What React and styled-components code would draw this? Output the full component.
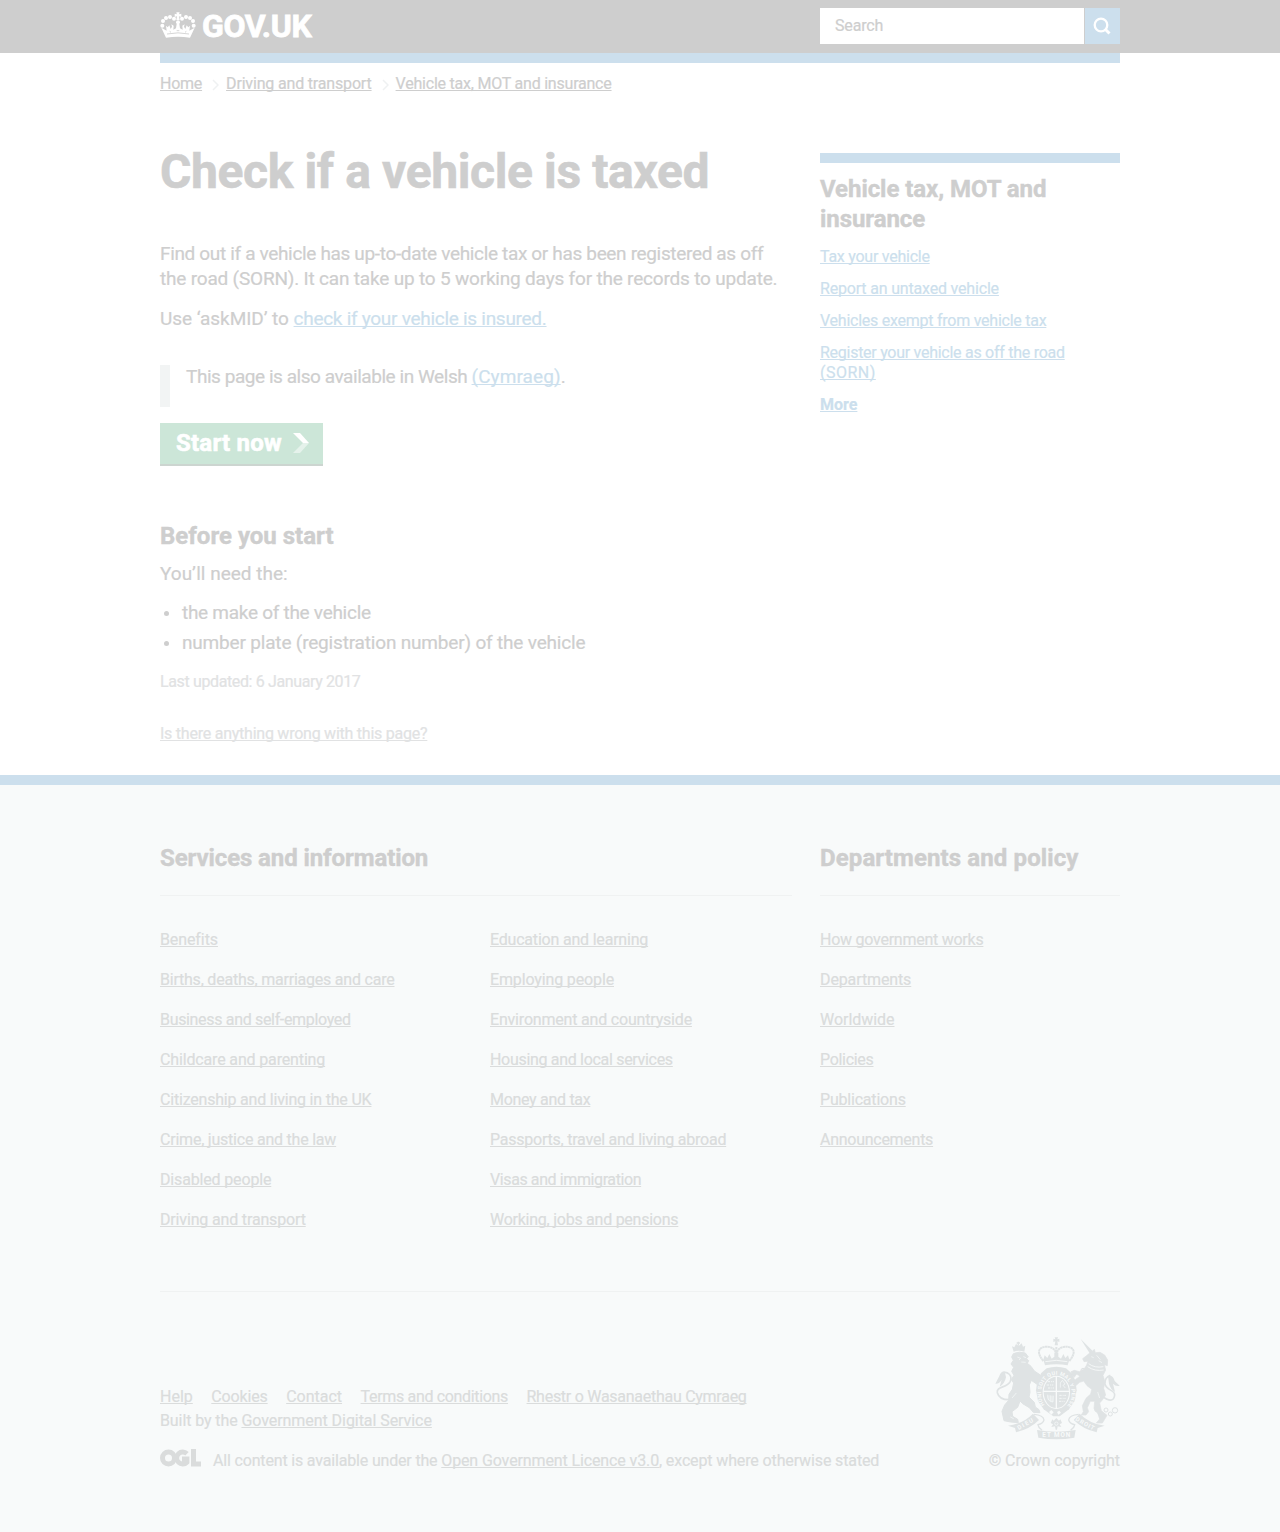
import React from 'react';
import styled, { createGlobalStyle } from 'styled-components';

const c = {
  ink: '#cecece', blue: '#ccdfed', green: '#cce6d8', footer: '#f8fafa',
  footerText: '#dadcdc', muted: '#e1e2e3', rule: '#f0f2f2', arms: '#dfe3e4',
};

const Global = createGlobalStyle`
  * { box-sizing: border-box; }
  body {
    margin: 0; background: #fff; color: ${c.ink};
    font-family: Roboto, "Liberation Sans", sans-serif;
    -webkit-text-stroke: 0.2px currentColor;
  }
  h1, h2, p, ul { margin: 0; padding: 0; }
  ul { list-style: none; }
`;

const Container = styled.div`width: 960px; margin: 0 auto;`;
const Text = styled.span`letter-spacing: ${p => p.$ls || 0}px;`;
const Link = styled.a`
  color: ${p => p.$color || 'inherit'};
  font-weight: ${p => (p.$bold ? 700 : 'inherit')};
  letter-spacing: ${p => p.$ls || 0}px;
  text-decoration: underline;
  text-decoration-thickness: 1px;
  text-underline-offset: 1px;
  text-decoration-skip-ink: none;
`;

const Header = styled.header`height: 53px; background: ${c.ink};`;
const HeaderRow = styled(Container)`display: flex; justify-content: space-between; padding-top: 8px;`;
const Brand = styled.a`display: flex; color: #fff; padding-top: 4px;`;
const BrandName = styled.span`
  font-size: 32px; line-height: 28px; font-weight: 700; letter-spacing: -0.4px; margin-left: 6px;
  -webkit-text-stroke: 0.8px #fff;
`;
const Search = styled.form`display: flex; width: 300px; height: 36px; gap: 1px;`;
const SearchField = styled.div`
  width: 264px; background: #fff; padding-left: 15px; font-size: 16px; line-height: 36px; letter-spacing: -0.15px;
`;
const SearchButton = styled.button`
  flex: 1; border: 0; padding: 0 2px 0 0; background: ${c.blue}; display: flex; align-items: center; justify-content: center;
`;
const BlueBar = styled(Container)`height: 10px; background: ${c.blue};`;

const Crumbs = styled.nav`
  display: flex; height: 42px; padding-top: 11px; font-size: 16px; line-height: 20px;
`;
const CrumbArrow = styled.svg`width: 7px; height: 12px; margin: 5px 7px 0 10px;`;

const Columns = styled.div`display: flex; justify-content: space-between; height: 670px;`;
const Main = styled.main`width: 630px; font-size: 19px; line-height: 25px;`;
const Title = styled.h1`
  font-size: 48px; line-height: 50px; font-weight: 700; padding-top: 42px; margin-bottom: 44px;
  letter-spacing: -0.38px; white-space: nowrap; -webkit-text-stroke: 0.6px currentColor;
`;
const Para = styled.p`margin-top: ${p => p.$top || 0}px; white-space: nowrap;`;
const Callout = styled.div`
  margin-top: 34px; height: 42px; border-left: 10px solid #f2f4f4; padding-left: 16px; line-height: 23px;
`;
const StartButton = styled.a`
  display: flex; width: 163px; height: 43px; margin-top: 16px; padding-left: 16px;
  background: ${c.green}; border-bottom: 2px solid #ccd5d0; color: #fff;
  font-size: 24px; line-height: 40px; font-weight: 700; letter-spacing: 0.22px;
  -webkit-text-stroke: 0.6px #fff;
`;
const StartArrow = styled.svg`width: 16px; height: 20px; margin: 10px 0 0 11px;`;
const Heading = styled.h2`
  font-size: 24px; line-height: 30px; font-weight: 700; letter-spacing: ${p => p.$ls || 0}px;
  margin-top: ${p => p.$top || 0}px; -webkit-text-stroke: 0.4px currentColor;
`;
const Bullets = styled.ul`margin-top: 12px; line-height: 30px;`;
const Bullet = styled.li`
  display: flex; align-items: center; letter-spacing: ${p => p.$ls || 0}px;
  &::before { content: ''; width: 5px; height: 5px; border-radius: 50%; background: ${c.ink}; margin: 1px 13px 0 4px; }
`;
const Meta = styled.p`
  font-size: 16px; line-height: 20px; margin-top: ${p => p.$top}px; color: ${c.muted};
`;
const Aside = styled.aside`width: 300px; height: 300px; margin-top: 48px; border-top: 10px solid ${c.blue}; padding-top: 11px;`;
const Related = styled.ul`margin-top: 13px; font-size: 16px; line-height: 20px; color: ${c.blue};`;
const RelatedItem = styled.li`margin-bottom: 12px;`;

const Footer = styled.footer`
  height: 757px; border-top: 10px solid ${c.blue}; background: ${c.footer}; color: ${c.footerText}; font-size: 16px; line-height: 20px;
`;
const FooterNav = styled.div`display: flex; justify-content: space-between; height: 507px; padding-top: 58px; border-bottom: 1px solid ${c.rule};`;
const FooterSection = styled.section`width: ${p => p.$width}px;`;
const FooterHeading = styled(Heading)`color: ${c.ink}; height: 53px; border-bottom: 1px solid ${c.rule};`;
const LinkColumns = styled.div`display: flex; margin-top: 34px;`;
const LinkList = styled.ul`flex: 0 0 330px;`;
const LinkItem = styled.li`height: 40px;`;
const FooterBase = styled.div`display: flex; justify-content: space-between; padding-top: 45px;`;
const BaseText = styled.div`padding-top: 50px;`;
const BaseLinks = styled.ul`display: flex; gap: 18.5px;`;
const Built = styled.p`margin-top: 4px;`;
const Licence = styled.p`display: flex; margin-top: 20px; white-space: pre;`;
const Ogl = styled.svg`width: 41px; height: 18px; margin: -2px 12px 0 0;`;
const Copyright = styled.div`display: flex; flex-direction: column; align-items: flex-end;`;
const ArmsSvg = styled.svg`
  width: 126px; height: 104px; margin-bottom: 10px; font-family: Roboto, sans-serif; -webkit-text-stroke: 0;
`;

const Crown = () => (
  <svg width="36" height="26" viewBox="0 0 108 78" fill="#fff">
    {[[7, 41], [9, 27], [18, 18], [30, 15], [42, 20], [66, 20], [78, 15], [90, 18], [99, 27], [101, 41]].map(([x, y]) => (
      <circle key={`${x}-${y}`} cx={x} cy={y} r="6" />
    ))}
    <circle cx="54" cy="31" r="6" />
    <path d="M51 9 49 1H59L57 7 64 5V15L57 13 59 24H49L51 13 44 15V5L51 7Z" />
    <path d="M4 47 20 56 18 41 23 46 28 40 32 51 36 44 34 37 41 41 40 53 48 49 50 36H58L60 49 68 53 67 41 74 37 72 44 76 51 80 40 85 46 90 41 88 56 104 47 90 77Q54 71 18 77Z" />
    <path d="M21 66Q54 59 87 66" fill="none" stroke={c.ink} strokeWidth="2.5" />
    <path d="M29 58 33 61M79 58 75 61M50 56H58" fill="none" stroke={c.ink} strokeWidth="2.5" />
  </svg>
);

const Arms = () => (
  <ArmsSvg viewBox="42 36 378 312" fill={c.arms}>
    {/* lion */}
    <path d="M101 80 96 64 103 67 108 57 116 63 125 55 129 65 136 62 133 80Q116 75 101 80Z" />
    <path d="M115 50V62M110 54H120" stroke={c.arms} strokeWidth="4" />
    <path stroke={c.arms} strokeWidth="3" strokeLinejoin="round" d="M100 86Q118 78 136 84L145 96 139 101 146 107 142 115 153 124 163 138 181 150 187 160 181 167 173 165 177 174 170 177 154 166 148 180 150 202 147 216 163 232 166 246 177 254 180 263 160 262 148 248 128 236 120 228 113 247 96 260 98 274 113 283 115 293 92 291 72 287 66 259 74 240 86 226 87 208 97 193 101 174 94 164 102 151 95 139 101 127 93 117 100 106 95 96Z" />
    <path d="M89 224Q58 225 52 203C48 184 81 189 91 169C98 151 82 139 70 143" fill="none" stroke={c.arms} strokeWidth="5" />
    <path d="M74 139Q62 139 58 153L46 176Q57 178 65 164L59 185Q74 177 78 157Z" />
    <path d="M112 96 122 100 117 105M130 95 138 98M124 111 137 112M96 219 109 204M91 276 101 281" fill="none" stroke={c.footer} strokeWidth="2" />

    {/* royal crown */}
    <path d="M224 37H234L232 43 238 41V51L232 49 234 61H224L226 49 220 51V41L226 43Z" />
    <path d="M190 108C172 86 174 72 188 67C208 61 225 70 227 83M268 108C286 86 284 72 270 67C250 61 233 70 231 83M229 66V96" fill="none" stroke={c.arms} strokeWidth="6" strokeDasharray="7 1" />
    <path d="M190 104 194 91 202 99 208 87 215 101 223 95V83H235V95L243 101 250 87 256 99 264 91 268 104 263 121Q229 114 195 121Z" />
    <path d="M196 110Q229 102 262 110" fill="none" stroke={c.footer} strokeWidth="2.5" />

    {/* garter and shield */}
    <path d="M200 130Q229 120 258 130L274 144 286 166 290 196 284 228 267 253 239 274H220L191 253 174 228 168 196 172 166 184 144Z" />
    <ellipse cx="229" cy="202" rx="41" ry="50" fill={c.footer} />
    <ellipse cx="229" cy="202" rx="38" ry="47" />
    <path d="M229 153V249M190 199H268" stroke={c.footer} strokeWidth="4" />
    <path d="M203 170H222M200 180H220M204 189H222M238 220H257M237 229H254M238 211H258" stroke={c.footer} strokeWidth="2.5" strokeDasharray="7 3 3 2" />
    <path d="M241 188V174L247 166 255 177 249 181 256 189M203 209Q200 229 219 231L220 212M207 211V225M212 211V229M216 212V230" fill="none" stroke={c.footer} strokeWidth="2" />
    <path d="M207 261 214 255 221 262 214 269ZM231 261 238 257 243 263 235 269Z" fill={c.footer} />
    <path id="garterPath" d="M194 240A46 55 0 1 1 264 240" fill="none" />
    <text fill={c.footer} fontSize="16" fontWeight="700"><textPath href="#garterPath" textLength="238">HONI SOIT QUI MAL Y PENSE</textPath></text>

    {/* unicorn */}
    <path d="M302 42 338 78 330 86Z" />
    <path stroke={c.arms} strokeWidth="2" strokeLinejoin="round" d="M329 84 337 79 343 73 346 83 360 82 374 90 383 105 382 122 373 119 377 135 369 151 375 171 371 190 377 210 367 225 359 234 364 257 381 271 374 283 367 294 349 294 359 282 354 267 342 250 344 229 331 229 322 248 326 260 318 270 304 270 310 260 307 242 318 220 332 207 335 193 321 182 311 168 299 172 286 183 280 179 286 164 302 152 289 148 283 157 276 151 273 140 283 136 298 140 313 131 320 120 324 109 312 110 308 101 321 91Z" />
    <path d="M326 116Q344 130 370 125M323 125Q345 140 371 135" fill="none" stroke={c.footer} strokeWidth="2.5" />
    <path d="M365 213Q401 239 404 210C405 194 377 197 375 176Q374 157 391 151" fill="none" stroke={c.arms} strokeWidth="5" />
    <path d="M384 153Q399 149 404 168L419 182Q407 185 399 176L405 201Q391 192 387 176Z" />
    <path d="M334 95 341 98M350 91 361 104M356 107 366 113M353 201 359 219" fill="none" stroke={c.footer} strokeWidth="2" />
    <g fill="none" stroke={c.arms} strokeWidth="3">
      <circle cx="309" cy="136" r="6" /><circle cx="301" cy="148" r="5" /><circle cx="350" cy="254" r="6" />
      <circle cx="364" cy="268" r="6" /><circle cx="378" cy="255" r="6" /><circle cx="391" cy="267" r="6" /><circle cx="405" cy="256" r="8" />
    </g>

    {/* motto ribbon */}
    <path d="M84 302Q128 297 159 266L177 285Q150 312 108 322L105 309ZM374 302Q330 297 299 266L281 285Q308 312 350 322L353 309Z" />
    <path d="M171 315Q229 326 287 315L283 338Q229 347 175 338Z" />
    <path d="M162 268Q190 270 192 285Q189 296 174 299L177 307 186 316M296 268Q268 270 266 285Q269 296 284 299L281 307 272 316" fill="none" stroke={c.arms} strokeWidth="4" />
    <path d="M229 279 237 287 241 283 246 294 239 298 244 306 233 304 231 314H227L225 304 214 306 219 298 212 294 217 283 221 287Z" />
    <circle cx="229" cy="296" r="5" fill="none" stroke={c.footer} strokeWidth="2" />
    <g fill={c.footer} fontSize="19" fontWeight="700">
      <text transform="translate(116 315) rotate(-29)" fontSize="18" textLength="52">DIEU</text>
      <text x="187" y="337" textLength="84">ET MON</text>
      <text transform="translate(285 286) rotate(29)" fontSize="18" textLength="62">DROIT</text>
    </g>
  </ArmsSvg>
);

const services = [
  [['Benefits', -0.1], ['Births, deaths, marriages and care', -0.22], ['Business and self-employed', -0.33], ['Childcare and parenting', -0.15],
    ['Citizenship and living in the UK', -0.2], ['Crime, justice and the law', -0.22], ['Disabled people', -0.16], ['Driving and transport', -0.16]],
  [['Education and learning', -0.2], ['Employing people', -0.14], ['Environment and countryside', -0.19], ['Housing and local services', -0.31],
    ['Money and tax', -0.3], ['Passports, travel and living abroad', -0.23], ['Visas and immigration', -0.4], ['Working, jobs and pensions', -0.25]],
];
const departments = [['How government works', -0.25], ['Departments', -0.12], ['Worldwide', -0.04], ['Policies', -0.3], ['Publications', -0.2], ['Announcements', -0.27]];
const related = [['Tax your vehicle', -0.25], ['Report an untaxed vehicle', -0.18], ['Vehicles exempt from vehicle tax', -0.25]];
const crumbs = [['Home', -0.25], ['Driving and transport', -0.17], ['Vehicle tax, MOT and insurance', -0.22]];
const baseLinks = [['Help', 0], ['Cookies', -0.15], ['Contact', 0], ['Terms and conditions', -0.33], ['Rhestr o Wasanaethau Cymraeg', -0.27]];

const Links = ({ items }) => (
  <LinkList>{items.map(([t, ls]) => <LinkItem key={t}><Link $ls={ls}>{t}</Link></LinkItem>)}</LinkList>
);

export default function App() {
  return (
    <>
      <Global />
      <Header>
        <HeaderRow>
          <Brand><Crown /><BrandName>GOV.UK</BrandName></Brand>
          <Search>
            <SearchField>Search</SearchField>
            <SearchButton type="button" aria-label="Search">
              <svg width="18" height="18" viewBox="0 0 18 18" fill="none" stroke="#fff" strokeWidth="2.3">
                <circle cx="8" cy="8" r="6.3" /><path d="M12 12 16.5 16.5" strokeWidth="3" />
              </svg>
            </SearchButton>
          </Search>
        </HeaderRow>
      </Header>
      <BlueBar />
      <Container>
        <Crumbs>
          {crumbs.map(([t, ls], i) => (
            <React.Fragment key={t}>
              {i > 0 && <CrumbArrow viewBox="0 0 7 12"><path d="M1 1 6 6 1 11" fill="none" stroke="#eff1f2" strokeWidth="1.5" /></CrumbArrow>}
              <Link $ls={ls}>{t}</Link>
            </React.Fragment>
          ))}
        </Crumbs>
        <Columns>
          <Main>
            <Title>Check if a vehicle is taxed</Title>
            <Para>
              <Text $ls={-0.34}>Find out if a vehicle has up-to-date vehicle tax or has been registered as off</Text><br />
              <Text $ls={-0.19}>the road (SORN). It can take up to 5 working days for the records to update.</Text>
            </Para>
            <Para $top={15}><Text $ls={-0.05}>Use ‘askMID’ to </Text><Link $color={c.blue} $ls={-0.28}>check if your vehicle is insured.</Link></Para>
            <Callout><Text $ls={-0.45}>This page is also available in Welsh </Text><Link $color={c.blue} $ls={0.1}>(Cymraeg)</Link>.</Callout>
            <StartButton>
              Start now
              <StartArrow viewBox="0 0 16 20"><path d="M0 0H7L16 10H10Z" fill="#fff" /><path d="M10 10H16L7 20H0Z" fill="#e5f2eb" /></StartArrow>
            </StartButton>
            <Heading $top={55}>Before you start</Heading>
            <Para $top={10}>You’ll need the:</Para>
            <Bullets>
              <Bullet $ls={-0.28}>the make of the vehicle</Bullet>
              <Bullet $ls={-0.18}>number plate (registration number) of the vehicle</Bullet>
            </Bullets>
            <Meta $top={14}><Text $ls={-0.37}>Last updated: 6 January 2017</Text></Meta>
            <Meta $top={32}><Link $ls={-0.24}>Is there anything wrong with this page?</Link></Meta>
          </Main>
          <Aside>
            <Heading $ls={-0.06}>Vehicle tax, MOT and insurance</Heading>
            <Related>
              {related.map(([t, ls]) => <RelatedItem key={t}><Link $ls={ls}>{t}</Link></RelatedItem>)}
              <RelatedItem><Link><Text $ls={-0.27}>Register your vehicle as off the road </Text><Text $ls={0.5}>(SORN)</Text></Link></RelatedItem>
              <RelatedItem><Link $bold>More</Link></RelatedItem>
            </Related>
          </Aside>
        </Columns>
      </Container>
      <Footer>
        <Container>
          <FooterNav>
            <FooterSection $width={632}>
              <FooterHeading $ls={-0.1}>Services and information</FooterHeading>
              <LinkColumns>{services.map((s, i) => <Links key={i} items={s} />)}</LinkColumns>
            </FooterSection>
            <FooterSection $width={300}>
              <FooterHeading $ls={0.11}>Departments and policy</FooterHeading>
              <LinkColumns><Links items={departments} /></LinkColumns>
            </FooterSection>
          </FooterNav>
          <FooterBase>
            <BaseText>
              <BaseLinks>{baseLinks.map(([t, ls]) => <li key={t}><Link $ls={ls}>{t}</Link></li>)}</BaseLinks>
              <Built><Text $ls={-0.1}>Built by the </Text><Link $ls={-0.06}>Government Digital Service</Link></Built>
              <Licence>
                <Ogl viewBox="0 0 41 18" fill="none" stroke={c.footerText} strokeWidth="5">
                  <circle cx="8.5" cy="9" r="6" /><path d="M27 4.8A6 6 0 1 0 27 13.2V10H22" strokeWidth="4.8" /><path d="M33.5 0V15H41" strokeWidth="5" />
                </Ogl>
                <Text $ls={-0.17}>All content is available under the </Text>
                <Link $ls={-0.12}>Open Government Licence v3.0</Link>
                <Text $ls={-0.13}>, except where otherwise stated</Text>
              </Licence>
            </BaseText>
            <Copyright><Arms /><Text $ls={-0.07}>© Crown copyright</Text></Copyright>
          </FooterBase>
        </Container>
      </Footer>
    </>
  );
}
